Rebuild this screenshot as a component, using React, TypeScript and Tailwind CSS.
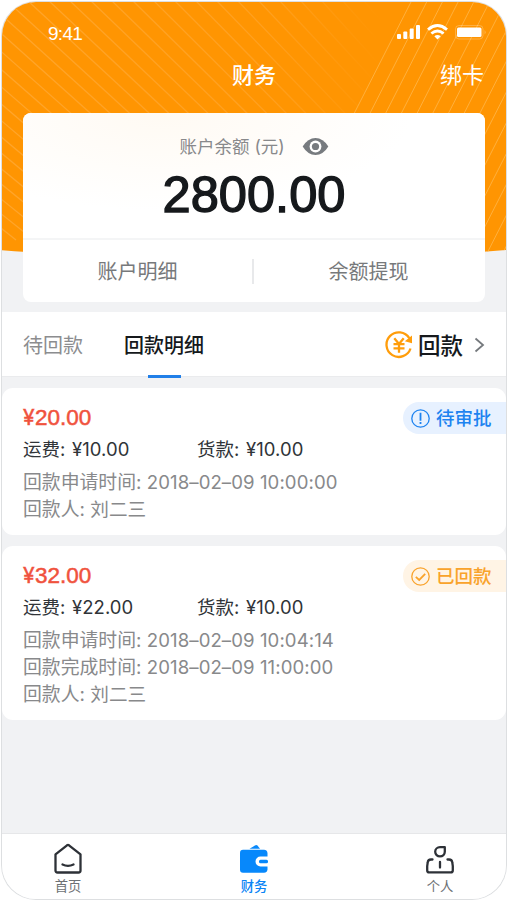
import type { ReactNode } from "react";

interface PaymentRecord {
  id: number;
  amount: string;
  freight: string;
  goods: string;
  appliedAt: string;
  finishedAt?: string;
  payee: string;
  status: "pending" | "done";
}

const records: PaymentRecord[] = [
  {
    id: 1,
    amount: "20.00",
    freight: "¥10.00",
    goods: "¥10.00",
    appliedAt: "2018–02–09 10:00:00",
    payee: "刘二三",
    status: "pending",
  },
  {
    id: 2,
    amount: "32.00",
    freight: "¥22.00",
    goods: "¥10.00",
    appliedAt: "2018–02–09 10:04:14",
    finishedAt: "2018–02–09 11:00:00",
    payee: "刘二三",
    status: "done",
  },
];

const leftLines = Array.from({ length: 34 }, (_, i) => i);
const rightLines = Array.from({ length: 20 }, (_, i) => i);

function HeaderBackground() {
  return (
    <svg
      className="absolute inset-x-0 top-0 w-full h-[250px]"
      viewBox="2 2 504 250"
      preserveAspectRatio="none"
    >
      <defs>
        <linearGradient id="fade" gradientUnits="userSpaceOnUse" x1="0" y1="0" x2="380" y2="0">
          <stop offset="0" stopColor="#ffa52b" />
          <stop offset="0.7" stopColor="#ffa01f" />
          <stop offset="1" stopColor="#ff9502" />
        </linearGradient>
        <clipPath id="sheet">
          <path d="M0 0H507V250Q254 270 0 250Z" />
        </clipPath>
        <clipPath id="left">
          <path d="M0 0H412L282 255H0Z" />
        </clipPath>
      </defs>
      <g clipPath="url(#sheet)">
        <rect width="507" height="260" fill="#ff9502" />
        <g stroke="url(#fade)" strokeWidth="1.300" clipPath="url(#left)">
          {leftLines.map((i) => (
            <path key={i} d={`M${i * 21 - 330} 0l${310 - i * 3} 240`} />
          ))}
        </g>
        <g stroke="#ffb03d" strokeWidth="1">
          {rightLines.map((i) => (
            <path key={i} d={`M${412 + i * 15.7} 0l-130 255`} />
          ))}
        </g>
      </g>
    </svg>
  );
}

function StatusBar() {
  return (
    <div className="flex items-start justify-between h-[28px] pl-[46px] pr-[20px]">
      <span className="text-[19px] leading-[26px] tracking-[-0.700px]">9:41</span>
      <svg className="mt-[2px] w-[90px] h-5" viewBox="396 23 90 20" fill="white">
        <rect x="397" y="34" width="4" height="5" rx="1" />
        <rect x="403.300" y="31.500" width="4" height="7.500" rx="1" />
        <rect x="409.700" y="28.500" width="4" height="10.500" rx="1" />
        <rect x="416" y="25" width="4" height="14" rx="1" />
        <g fill="none" stroke="white" strokeWidth="2.800">
          <path d="M428 29.600Q437.500 21.500 447 29.600" />
          <path d="M431.400 33.500Q437.500 28.400 443.600 33.500" />
        </g>
        <path d="M434.300 36.200Q437.500 33.800 440.700 36.200L437.500 39.500Z" />
        <rect x="455.500" y="25.500" width="27.500" height="13.500" rx="3.500" fill="none" stroke="white" strokeOpacity="0.250" />
        <rect x="457" y="27.500" width="24.500" height="9.500" rx="1.500" />
        <path d="M484.700 30q1.500 2 0 4.500z" opacity="0.400" />
      </svg>
    </div>
  );
}

function BalanceCard() {
  return (
    <div className="mx-[21px] mt-[19px] h-[189px] rounded-[8px] bg-white overflow-hidden">
      <div className="h-[127px] border-b-2 border-[#f4f5f6] bg-radial-[at_30%_0%] from-[#fffaf3] to-white to-55%">
        <div className="flex items-center justify-center h-[22px] mb-[8px] pt-[23px] box-content text-[17.500px] text-[#88898b]">
          <span className="flex items-center w-[109px] whitespace-pre">
            账户余额 <span className="font-[Inter]">(</span>元<span className="font-[Inter]">)</span>
          </span>
          <svg className="ml-[13px] w-[27px] h-[19px] -mt-[2px]" viewBox="0 0 28 20">
            <path d="M.5 10Q6 1 14 1t13.500 9Q22 19 14 19T.5 10Z" fill="#777b7f" />
            <circle cx="14" cy="10" r="6.200" fill="white" />
            <circle cx="14" cy="10" r="3.800" fill="#777b7f" />
          </svg>
        </div>
        <p className="text-center text-[50.600px] leading-[58px] text-[#16191c] [-webkit-text-stroke:1.400px_#16191c]">
          2800.00
        </p>
      </div>
      <div className="flex items-center h-[62px] pt-[2px] text-[20px] text-[#77797b]">
        <span className="flex-1 text-center">账户明细</span>
        <span className="w-[2px] h-[25px] -mt-[2px] bg-[#e8e9eb]" />
        <span className="flex-1 pr-[2px] text-center">余额提现</span>
      </div>
    </div>
  );
}

function TabRow() {
  return (
    <div className="flex mt-[10px] h-[65px] pl-[21px] pr-[21px] bg-white border-b border-[#eaebed] text-[20px] leading-[68px]">
      <span className="text-[#8c8d8f]">待回款</span>
      <div className="relative ml-[41px] font-medium text-[#16191c]">
        回款明细
        <span className="absolute left-[24px] top-[63px] w-[33px] h-[3px] bg-[#217fe8]" />
      </div>
      <div className="flex items-center ml-auto h-[66px] text-[22.500px] font-medium text-[#16191c]">
        <svg className="w-[28px] h-[28px]" viewBox="0 0 28 28" fill="none" stroke="#ff9d0b" strokeWidth="2.300">
          <path d="M25.500 17.500A12.300 12.300 0 1 1 24.300 7.200" />
          <path d="M27 4.500V12.300L19.800 10.300Z" fill="#ff9d0b" stroke="none" />
          <path d="M9.300 7.300l4.700 5.700 4.700-5.700M14 13v8.700M8.500 13.200h11M8.500 17.300h11" />
        </svg>
        <span className="ml-[5px] pt-[3px]">回款</span>
        <svg className="ml-[11px] w-[11px] h-[16px]" viewBox="0 0 11 16" fill="none" stroke="#75797d" strokeWidth="1.800">
          <path d="M1.500 1.500L9 8l-7.500 6.500" />
        </svg>
      </div>
    </div>
  );
}

function StatusBadge({ status }: { status: PaymentRecord["status"] }) {
  if (status === "pending") {
    return (
      <span className="flex items-center gap-[6px] h-[32px] w-[103px] pl-[8px] rounded-l-full bg-[#e7f1ff] text-[18.500px] font-medium text-[#1d83f0]">
        <svg className="w-[19px] h-[19px] shrink-0" viewBox="0 0 19 19" fill="none" stroke="#1d83f0" strokeWidth="1.300">
          <circle cx="9.500" cy="9.500" r="8.700" />
          <path d="M9.500 3.800v8M9.500 13v2" strokeWidth="1.800" />
        </svg>
        <span className="pt-px">待审批</span>
      </span>
    );
  }
  return (
    <span className="flex items-center gap-[6px] h-[32px] w-[103px] pl-[8px] rounded-l-full bg-[#fff4e5] text-[18.500px] font-medium text-[#f9a32b]">
      <svg className="w-[19px] h-[19px] shrink-0" viewBox="0 0 19 19" fill="none" stroke="#f9a32b" strokeWidth="1.300">
        <circle cx="9.500" cy="9.500" r="8.700" />
        <path d="M4.800 9.800l3.400 3.100 6-6" strokeWidth="1.800" />
      </svg>
      <span className="pt-px">已回款</span>
    </span>
  );
}

function Money({ label, value }: { label: string; value: string }) {
  return (
    <span className="flex w-[174px] whitespace-pre">
      <span className="w-[49px]">{label}: </span>
      <span className="tracking-[0.050px]">{value}</span>
    </span>
  );
}

function InfoLine({ label, children }: { label: string; children: ReactNode }) {
  return (
    <p className="h-[27px] leading-[28px] text-[18.850px] text-[#88898b] whitespace-pre">
      {label}: <span className="text-[18.600px] tracking-[0.080px]">{children}</span>
    </p>
  );
}

function RecordCard({ record }: { record: PaymentRecord }) {
  return (
    <div className="pt-[15px] pb-[13px] pl-[21px] bg-white rounded-[11px] font-[Inter,'Noto_Sans_CJK_SC',sans-serif]">
      <div className="flex items-center justify-between h-[30px]">
        <span className="font-['Liberation_Sans',sans-serif] text-[22.500px] text-[#f0523d] [-webkit-text-stroke:0.500px_#f0523d]">
          <span className="font-[Inter,sans-serif] text-[21px] tracking-[0.500px]">¥</span>
          {record.amount}
        </span>
        <StatusBadge status={record.status} />
      </div>
      <div className="flex items-center h-[32px] pt-[2px] mb-[3px] text-[18.500px] text-[#303438]">
        <Money label="运费" value={record.freight} />
        <Money label="货款" value={record.goods} />
      </div>
      <InfoLine label="回款申请时间">{record.appliedAt}</InfoLine>
      {record.finishedAt && <InfoLine label="回款完成时间">{record.finishedAt}</InfoLine>}
      <InfoLine label="回款人">{record.payee}</InfoLine>
    </div>
  );
}

function TabBar() {
  return (
    <nav className="flex items-start justify-between mt-auto h-[66px] pt-[9px] px-[45px] bg-white border-t border-[#e6e7e9] text-[13.300px] leading-[18px] text-[#6d7175]">
      <div className="flex flex-col items-center w-[42px]">
        <svg className="w-[30px] h-[34px]" viewBox="0 0 30 34" fill="none" stroke="#2d3137" strokeWidth="2.300" strokeLinejoin="round" strokeLinecap="round">
          <path d="M2.500 11.300L14 2.300Q15 1.600 16 2.300L27.500 11.300V27.500Q27.500 29.500 25.500 29.500H4.500Q2.500 29.500 2.500 27.500Z" />
          <path d="M9.500 21.500q5.500 2.600 11 0" />
        </svg>
        <span className="pt-px">首页</span>
      </div>
      <div className="flex flex-col items-center w-[42px] font-medium text-[#0a84f5]">
        <svg className="w-[30px] h-[34px]" viewBox="0 0 30 34" fill="#0788fb">
          <path d="M10.500 5.800L16.500 2.200Q17.500 1.600 18.500 2.600L21 5.800Z" />
          <path d="M4 6.800H25Q28 6.800 28.500 10V13.500H21.500a5 5 0 0 0 0 10H28.500V26.500Q28 29.800 25 29.800H4Q1 29.800 1 26.500V10Q1 6.800 4 6.800Z" />
          <rect x="20" y="16.800" width="9" height="3.400" rx="1.500" />
        </svg>
        <span className="pt-px">财务</span>
      </div>
      <div className="flex flex-col items-center w-[42px]">
        <svg className="w-[30px] h-[34px]" viewBox="0 0 30 34" fill="none" stroke="#2d3137" strokeWidth="2.300" strokeLinecap="round" strokeLinejoin="round">
          <path d="M19.800 4.200V8.800a4.800 4.600 0 1 1-4.800-4.600Z" />
          <path d="M7.500 16.500H6Q3 16.500 2.700 19.500L2.200 23.200V27.200Q2.200 29.400 4.200 29.400H25.800Q27.800 29.400 27.800 27.200V23.200L27.300 19.500Q27 16.500 24 16.500H22.500M15 19v5.500" />
        </svg>
        <span className="pt-px">个人</span>
      </div>
    </nav>
  );
}

export default function App() {
  return (
    <div className="h-[900px] w-[507px] pt-[2px] pl-[2px] pr-px pb-px bg-white font-['Liberation_Sans','Noto_Sans_CJK_SC',sans-serif]">
      <div className="relative flex flex-col h-full w-full overflow-hidden rounded-[34px] bg-[#f1f2f4] ring-1 ring-[#dddfe1]">
        <HeaderBackground />
        <div className="relative pt-[19px] text-white">
          <StatusBar />
          <div className="grid grid-cols-3 items-center h-[45px] px-[22px] pt-[7px] text-[22px]">
            <h1 className="col-start-2 text-center font-medium">财务</h1>
            <span className="text-right">绑卡</span>
          </div>
          <BalanceCard />
        </div>
        <TabRow />
        <div className="flex flex-col gap-[11px] pt-[11px]">
          {records.map((record) => (
            <RecordCard key={record.id} record={record} />
          ))}
        </div>
        <TabBar />
      </div>
    </div>
  );
}
